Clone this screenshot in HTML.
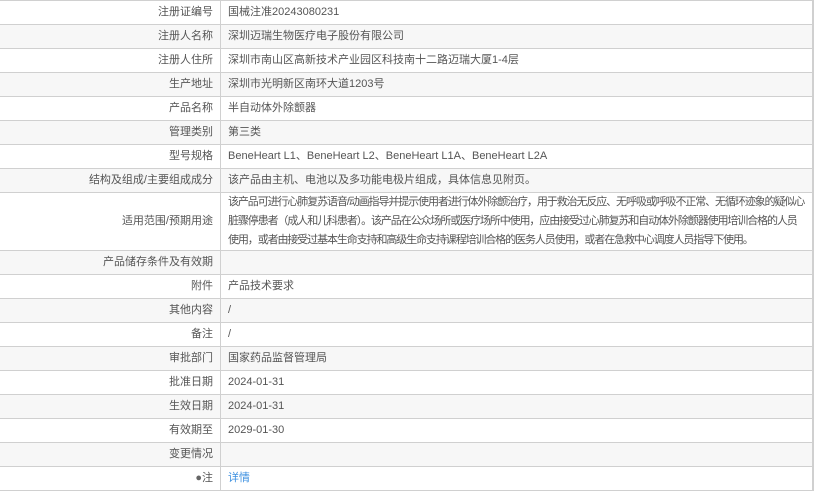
<!DOCTYPE html>
<html><head><meta charset="utf-8"><style>
html,body{margin:0;padding:0;background:#fff;width:817px;height:491px;overflow:hidden}
body{font-family:"Liberation Sans","Noto Sans CJK SC",sans-serif;font-size:11px;color:#555}
table{position:absolute;left:-2px;top:0;width:816px;border-collapse:collapse;table-layout:fixed}
td{border:1px solid #d0d0d0;padding:0 7px;height:23px;line-height:17px;vertical-align:middle;overflow:hidden}
td.l{width:207px;text-align:right;color:#555}
tr:nth-child(even) td{background:#f7f7f7}
td:last-child{border-right:2px solid #d0d0d0}
a{color:#3b8fe0;text-decoration:none}
.p{height:57px;line-height:19px;font-size:11px;letter-spacing:-1.1px;padding-right:0;white-space:nowrap}
</style></head><body>
<table>
<tr><td class="l">注册证编号</td><td>国械注准20243080231</td></tr>
<tr><td class="l">注册人名称</td><td>深圳迈瑞生物医疗电子股份有限公司</td></tr>
<tr><td class="l">注册人住所</td><td>深圳市南山区高新技术产业园区科技南十二路迈瑞大厦1-4层</td></tr>
<tr><td class="l">生产地址</td><td>深圳市光明新区南环大道1203号</td></tr>
<tr><td class="l">产品名称</td><td>半自动体外除颤器</td></tr>
<tr><td class="l">管理类别</td><td>第三类</td></tr>
<tr><td class="l">型号规格</td><td>BeneHeart L1、BeneHeart L2、BeneHeart L1A、BeneHeart L2A</td></tr>
<tr><td class="l">结构及组成/主要组成成分</td><td>该产品由主机、电池以及多功能电极片组成，具体信息见附页。</td></tr>
<tr><td class="l" style="height:57px">适用范围/预期用途</td><td class="p">该产品可进行心肺复苏语音/动画指导并提示使用者进行体外除颤治疗，用于救治无反应、无呼吸或呼吸不正常、无循环迹象的疑似心<br>脏骤停患者（成人和儿科患者）。该产品在公众场所或医疗场所中使用，应由接受过心肺复苏和自动体外除颤器使用培训合格的人员<br>使用，或者由接受过基本生命支持和高级生命支持课程培训合格的医务人员使用，或者在急救中心调度人员指导下使用。</td></tr>
<tr><td class="l">产品储存条件及有效期</td><td></td></tr>
<tr><td class="l">附件</td><td>产品技术要求</td></tr>
<tr><td class="l">其他内容</td><td>/</td></tr>
<tr><td class="l">备注</td><td>/</td></tr>
<tr><td class="l">审批部门</td><td>国家药品监督管理局</td></tr>
<tr><td class="l">批准日期</td><td>2024-01-31</td></tr>
<tr><td class="l">生效日期</td><td>2024-01-31</td></tr>
<tr><td class="l">有效期至</td><td>2029-01-30</td></tr>
<tr><td class="l">变更情况</td><td></td></tr>
<tr><td class="l"><span style="color:#666">●</span>注</td><td><a>详情</a></td></tr>
</table>
</body></html>
